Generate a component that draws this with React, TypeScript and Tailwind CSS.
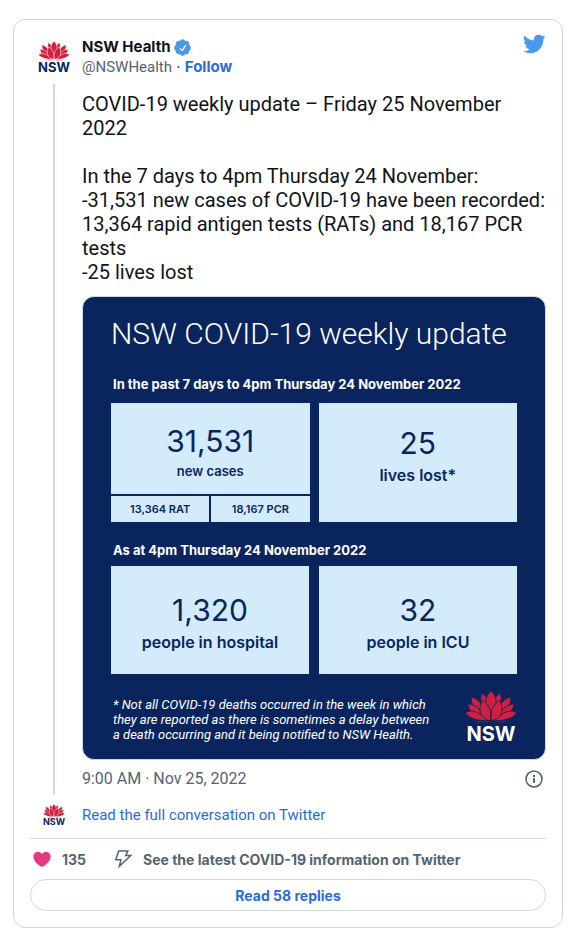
import type { ReactNode } from "react";

type Tone = "light" | "dark";

function Lotus({ className, tone }: { className: string; tone: Tone }) {
  const gap = tone === "light" ? "#ffffff" : "#0a255e";
  const half = (
    <>
      <path d="M64 25 C79 31 88 42 92 104 C68 80 57 50 64 25Z" />
      <path d="M32 36 C52 38 68 54 86 106 C50 94 34 66 32 36Z" />
      <path d="M22 57 C42 56 62 72 86 107 C52 102 28 84 22 57Z" />
      <path d="M15 84 C34 70 58 82 86 108 C54 108 28 102 15 84Z" />
    </>
  );
  const front = <path d="M66 46 C88 58 97 80 91 108 C62 102 51 76 66 46Z" />;
  return (
    <svg viewBox="14 16 158 100" className={className} fill="#d0203f" stroke={gap} strokeWidth="2.5" aria-hidden="true">
      {half}
      <g transform="translate(186 0) scale(-1 1)">{half}</g>
      <path d="M93 17 C115 36 113 66 93 106 C73 66 71 36 93 17Z" />
      {front}
      <g transform="translate(186 0) scale(-1 1)">{front}</g>
      <path d="M42 107 C70 111 116 111 144 107 C128 117 116 112 93 112 C70 112 58 117 42 107Z" />
    </svg>
  );
}

function Verified() {
  return (
    <svg viewBox="0 0 24 24" className="size-[19px]" fill="#4a99e9" aria-label="Verified account">
      <path d="M22.5 12.5c0-1.58-.875-2.95-2.148-3.6.154-.435.238-.905.238-1.4 0-2.21-1.71-3.998-3.818-3.998-.47 0-.92.084-1.336.25C14.818 2.415 13.51 1.5 12 1.5s-2.816.917-3.437 2.25c-.415-.165-.866-.25-1.336-.25-2.11 0-3.818 1.79-3.818 4 0 .494.083.964.237 1.4-1.272.65-2.147 2.018-2.147 3.6 0 1.495.782 2.798 1.942 3.486-.02.17-.032.34-.032.514 0 2.21 1.708 4 3.818 4 .47 0 .92-.086 1.335-.25.62 1.334 1.926 2.25 3.437 2.25 1.512 0 2.818-.916 3.437-2.25.415.163.865.248 1.336.248 2.11 0 3.818-1.79 3.818-4 0-.174-.012-.344-.033-.513 1.158-.687 1.943-1.99 1.943-3.484z" />
      <path fill="#ffffff" d="M16.482 9.83l-4.334 6.5c-.145.217-.382.334-.625.334-.143 0-.288-.04-.416-.126l-.115-.094-2.415-2.415c-.293-.293-.293-.768 0-1.06s.768-.294 1.06 0l1.77 1.767 3.825-5.74c.23-.345.696-.436 1.04-.207.346.23.44.696.21 1.04z" />
    </svg>
  );
}

function Bird() {
  return (
    <svg viewBox="0 0 24 24" className="size-6" fill="#4a99e9" aria-hidden="true">
      <path d="M23.643 4.937c-.835.37-1.732.62-2.675.733.962-.576 1.7-1.49 2.048-2.578-.9.534-1.897.922-2.958 1.13-.85-.904-2.06-1.47-3.4-1.47-2.572 0-4.658 2.086-4.658 4.66 0 .364.042.718.12 1.06-3.873-.195-7.304-2.05-9.602-4.868-.4.69-.63 1.49-.63 2.342 0 1.616.823 3.043 2.072 3.878-.764-.025-1.482-.234-2.11-.583v.06c0 2.257 1.605 4.14 3.737 4.568-.392.106-.803.162-1.227.162-.3 0-.593-.028-.877-.082.593 1.85 2.313 3.198 4.352 3.234-1.595 1.25-3.604 1.995-5.786 1.995-.376 0-.747-.022-1.112-.065 2.062 1.323 4.51 2.093 7.14 2.093 8.57 0 13.255-7.098 13.255-13.254 0-.2-.005-.402-.014-.602.91-.658 1.7-1.477 2.323-2.41z" />
    </svg>
  );
}

type StatProps = { value: string; label: string; box: string; small?: boolean; children?: ReactNode };

function Stat({ value, label, box, small = false, children }: StatProps) {
  return (
    <div className="flex flex-1 flex-col gap-[2px] text-[#0a255e]">
      <div className={`flex flex-1 flex-col items-center justify-center bg-[#d3ebfb] ${box}`}>
        <span className="text-[30px] leading-9">{value}</span>
        <span className={small ? "text-[13px] leading-6 font-semibold" : "text-base leading-7 font-semibold"}>{label}</span>
      </div>
      {children}
    </div>
  );
}

const tweet = `COVID-19 weekly update – Friday 25 November 2022

In the 7 days to 4pm Thursday 24 November:
-31,531 new cases of COVID-19 have been recorded:
13,364 rapid antigen tests (RATs) and 18,167 PCR tests
-25 lives lost`;

export default function App() {
  return (
    <main className="bg-white px-[13px] pt-[19px] pb-[10px] font-['Inter',sans-serif] text-[#0f1419]">
      <article className="rounded-xl border border-[#cfd9de] p-4">
        <div className="flex gap-1">
          <div className="flex w-12 shrink-0 flex-col items-center gap-[5px]">
            <a href="#profile" aria-label="NSW Health" className="mt-[-5px] flex size-12 flex-col items-center justify-center pt-1">
              <Lotus tone="light" className="h-5 w-8" />
              <span className="text-[13px] leading-3 font-bold text-[#0a255e]">NSW</span>
            </a>
            <div className="w-[2px] flex-1 bg-[#cfd9de]" />
          </div>
          <div className="min-w-0 flex-1">
            <header className="flex justify-between">
              <div className="pt-px text-[15px] leading-5">
                <div className="flex items-center gap-[2px]">
                  <a href="#profile" className="font-bold">NSW Health</a>
                  <Verified />
                </div>
                <div className="text-[#536471]">
                  <a href="#profile" className="font-['Roboto',sans-serif]">@NSWHealth</a> ·{" "}
                  <a href="#follow" className="font-bold text-[#2b6cd4]">Follow</a>
                </div>
              </div>
              <a href="#tweet" aria-label="View on Twitter" className="mt-[-4px]"><Bird /></a>
            </header>
            <p className="mt-[15px] font-['Roboto',sans-serif] text-xl leading-6 whitespace-pre-wrap">{tweet}</p>

            <section className="mt-3 rounded-xl border border-[#cfd9de] bg-[#0a255e] px-7 pt-[19px] pb-[15px] text-white">
              <h1 className="font-['Roboto',sans-serif] text-[30px] leading-9 font-light whitespace-nowrap">NSW COVID-19 weekly update</h1>
              <h2 className="mt-[22px] pl-[2px] text-[13px] leading-5 font-bold whitespace-nowrap">In the past 7 days to 4pm Thursday 24 November 2022</h2>
              <div className="mt-[9px] flex h-[119px] gap-[9px]">
                <Stat value="31,531" label="new cases" small box="pt-2">
                  <div className="flex gap-[2px] text-center text-[11px] leading-[26px] font-semibold">
                    <span className="flex-1 bg-[#d3ebfb]">13,364 RAT</span>
                    <span className="flex-1 bg-[#d3ebfb]">18,167 PCR</span>
                  </div>
                </Stat>
                <Stat value="25" label="lives lost*" box="pb-3" />
              </div>
              <h2 className="mt-[18px] pl-[2px] text-[13px] leading-5 font-bold">As at 4pm Thursday 24 November 2022</h2>
              <div className="mt-[6px] flex h-[108px] gap-[10px]">
                <Stat value="1,320" label="people in hospital" box="pt-2" />
                <Stat value="32" label="people in ICU" box="pt-2" />
              </div>
              <div className="mt-4 flex items-start justify-between">
                <p className="pt-[7px] pl-[2px] font-['Roboto',sans-serif] text-[13px] leading-[15px] whitespace-nowrap italic">
                  * Not all COVID-19 deaths occurred in the week in which
                  <br />
                  they are reported as there is sometimes a delay between
                  <br />a death occurring and it being notified to NSW Health.
                </p>
                <div className="flex flex-col items-center">
                  <Lotus tone="dark" className="h-[34px] w-[52px]" />
                  <span className="text-[20px] leading-5 font-bold">NSW</span>
                </div>
              </div>
            </section>

            <div className="mt-[9px] flex items-center justify-between text-[#536471]">
              <a href="#tweet" className="font-['Roboto',sans-serif] text-base leading-5">9:00 AM · Nov 25, 2022</a>
              <button type="button" aria-label="Twitter Ads info and privacy" className="mr-[2px]">
                <svg viewBox="0 0 20 20" className="size-5" fill="none" stroke="currentColor" strokeWidth="1.6" aria-hidden="true">
                  <circle cx="10" cy="10" r="8" />
                  <path d="M10 9.2v4.6M10 6v2" strokeWidth="2" />
                </svg>
              </button>
            </div>
            <div className="h-[5px]" />
          </div>
        </div>

        <a href="#conversation" className="mt-[5px] flex items-center gap-1 font-['Roboto',sans-serif] text-[15px] leading-8 text-[#2b6cd4]">
          <span className="flex w-12 flex-col items-center font-['Inter',sans-serif]">
            <Lotus tone="light" className="h-[14px] w-[22px]" />
            <span className="text-[9px] leading-2 font-bold text-[#0a255e]">NSW</span>
          </span>
          Read the full conversation on Twitter
        </a>

        <footer className="mt-[7px] border-t border-[#cfd9de]">
          <div className="flex h-10 items-center text-[14px] font-bold text-[#536471]">
            <button type="button" aria-label="Like, 135 likes" className="flex items-center gap-[10px] pl-[2px]">
              <svg viewBox="0 0 24 24" className="size-5" fill="#e7387f" aria-hidden="true">
                <path d="M12 21.2h-.014C9.4 21.1 1.6 14.9 1.6 8.9c0-3.064 2.625-5.654 5.603-5.654 2.29 0 3.98 1.48 4.796 2.63.814-1.148 2.504-2.63 4.795-2.63 2.98 0 5.604 2.59 5.604 5.655 0 6-7.804 12.2-10.387 12.3H12z" />
              </svg>
              135
            </button>
            <a href="#covid" className="ml-[27px] flex items-center gap-[10px]">
              <svg viewBox="0 0 20 20" className="size-5" fill="none" stroke="currentColor" strokeWidth="1.5" aria-hidden="true">
                <path d="M5.6 2h9.2l-2.1 4.6h5L6.4 17.2l1.5-6.4H2.8Z" />
              </svg>
              See the latest COVID-19 information on Twitter
            </a>
          </div>
          <button type="button" className="h-8 w-full rounded-full border border-[#cfd9de] text-[14px] font-bold text-[#2b6cd4]">
            Read 58 replies
          </button>
        </footer>
      </article>
    </main>
  );
}
